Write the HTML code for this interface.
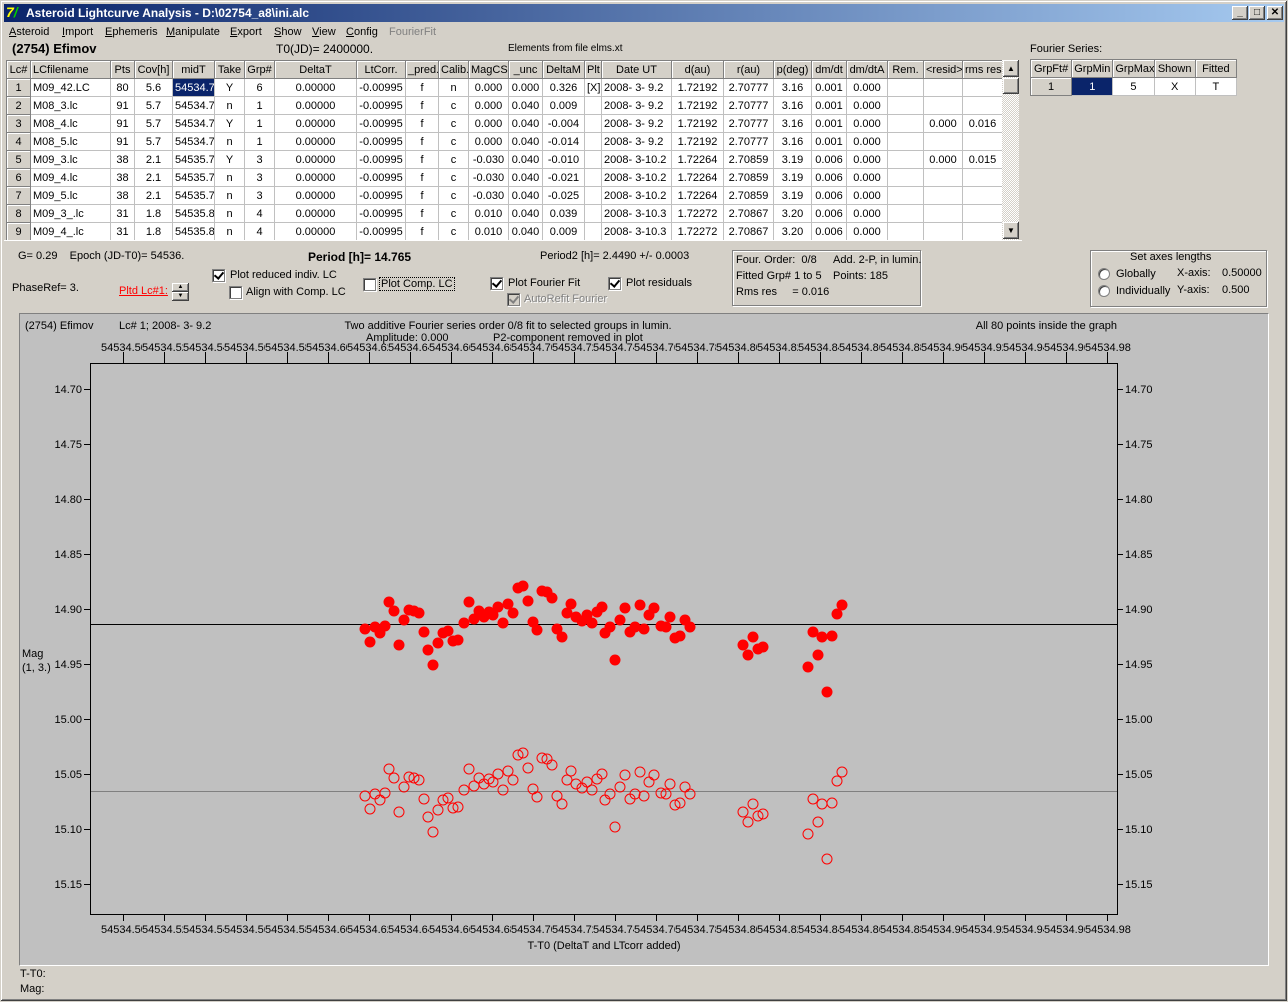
<!DOCTYPE html>
<html><head><meta charset="utf-8">
<style>
*{box-sizing:border-box}
body{margin:0;width:1288px;height:1002px;background:#d4d0c8;font-family:"Liberation Sans",sans-serif;font-size:11px;color:#000;position:relative;overflow:hidden}
.a{position:absolute;white-space:nowrap}
#win{position:absolute;left:0;top:0;width:1288px;height:1002px;border:1px solid #d4d0c8;box-shadow:inset -1px -1px #404040,inset 1px 1px #fff,inset -2px -2px #808080}
#title{position:absolute;left:4px;top:4px;width:1280px;height:18px;background:linear-gradient(90deg,#0a246a,#a6caf0);color:#fff;font-weight:bold;font-size:12px;line-height:18px;padding-left:22px}
.tb{position:absolute;top:6px;width:16px;height:14px;background:#d4d0c8;box-shadow:inset -1px -1px #404040,inset 1px 1px #fff,inset -2px -2px #808080;font-size:10px;font-weight:bold;color:#000;text-align:center;line-height:14px}
#menu span{position:absolute;top:0}
table{border-collapse:collapse;table-layout:fixed;position:absolute}
td{border:1px solid #c0c0c0;height:18px;padding:0 2px;overflow:hidden;white-space:nowrap;text-align:center;background:#fff;font-size:11px}
td.h{background:#d4d0c8;border:1px solid #808080;box-shadow:inset 1px 1px #fff}
td.l{text-align:left}
td.sel{background:#0a246a;color:#fff}
.cb{position:absolute;width:13px;height:13px;background:#fff;border:1px solid #808080;box-shadow:inset 1px 1px #404040,1px 1px #fff}
.cb.c::after{content:"";position:absolute;left:3px;top:0px;width:4px;height:7px;border:solid #000;border-width:0 2px 2px 0;transform:rotate(40deg)}
.cb.d{background:#d4d0c8}
.cb.d::after{border-color:#808080}
.grp{position:absolute;border:1px solid #808080;box-shadow:1px 1px #fff,inset 1px 1px #fff}
.rad{position:absolute;width:12px;height:12px;border-radius:50%;background:#fff;border:1px solid #808080;box-shadow:inset 1px 1px #404040}
</style></head><body>
<div id="win"></div>
<div id="title">Asteroid Lightcurve Analysis - D:\02754_a8\ini.alc</div>
<div class="a" style="left:6px;top:5px;width:15px;height:15px;color:#ff0;font-weight:bold;font-size:14px;line-height:15px;font-style:italic">7<span style="color:#0c0">/</span></div>
<div class="tb" style="left:1232px">_</div><div class="tb" style="left:1249px">□</div><div class="tb" style="left:1267px">✕</div>
<div id="menu" class="a" style="left:0;top:26px"><span style="left:9px"><u>A</u>steroid</span><span style="left:62px"><u>I</u>mport</span><span style="left:105px"><u>E</u>phemeris</span><span style="left:166px"><u>M</u>anipulate</span><span style="left:230px"><u>E</u>xport</span><span style="left:274px"><u>S</u>how</span><span style="left:312px"><u>V</u>iew</span><span style="left:346px"><u>C</u>onfig</span><span style="left:389px;color:#808080">FourierFit</span></div>
<div class="a" style="left:12px;top:41px;font-weight:bold;font-size:13px">(2754) Efimov</div>
<div class="a" style="left:276px;top:42px;font-size:12px">T0(JD)= 2400000.</div>
<div class="a" style="left:508px;top:43px;font-size:10px">Elements from file elms.xt</div>

<table style="left:6px;top:60px;width:996px">
<colgroup><col style="width:24px"><col style="width:80px"><col style="width:24px"><col style="width:38px"><col style="width:42px"><col style="width:30px"><col style="width:30px"><col style="width:82px"><col style="width:49px"><col style="width:33px"><col style="width:30px"><col style="width:40px"><col style="width:34px"><col style="width:42px"><col style="width:17px"><col style="width:70px"><col style="width:52px"><col style="width:50px"><col style="width:38px"><col style="width:35px"><col style="width:41px"><col style="width:36px"><col style="width:39px"><col style="width:40px"></colgroup>
<tr><td class="h">Lc#</td><td class="h l">LCfilename</td><td class="h">Pts</td><td class="h">Cov[h]</td><td class="h">midT</td><td class="h">Take</td><td class="h">Grp#</td><td class="h">DeltaT</td><td class="h">LtCorr.</td><td class="h">_pred.</td><td class="h">Calib.</td><td class="h">MagCS</td><td class="h">_unc</td><td class="h">DeltaM</td><td class="h">Plt</td><td class="h">Date UT</td><td class="h">d(au)</td><td class="h">r(au)</td><td class="h">p(deg)</td><td class="h">dm/dt</td><td class="h">dm/dtA</td><td class="h">Rem.</td><td class="h">&lt;resid&gt;</td><td class="h">rms res</td></tr>
<tr><td class="h">1</td><td class="l">M09_42.LC</td><td>80</td><td>5.6</td><td class="sel l">54534.7</td><td>Y</td><td>6</td><td>0.00000</td><td>-0.00995</td><td>f</td><td>n</td><td>0.000</td><td>0.000</td><td>0.326</td><td>[X]</td><td class="l">2008- 3- 9.2</td><td>1.72192</td><td>2.70777</td><td>3.16</td><td>0.001</td><td>0.000</td><td></td><td></td><td></td></tr>
<tr><td class="h">2</td><td class="l">M08_3.lc</td><td>91</td><td>5.7</td><td class="l">54534.7</td><td>n</td><td>1</td><td>0.00000</td><td>-0.00995</td><td>f</td><td>c</td><td>0.000</td><td>0.040</td><td>0.009</td><td></td><td class="l">2008- 3- 9.2</td><td>1.72192</td><td>2.70777</td><td>3.16</td><td>0.001</td><td>0.000</td><td></td><td></td><td></td></tr>
<tr><td class="h">3</td><td class="l">M08_4.lc</td><td>91</td><td>5.7</td><td class="l">54534.7</td><td>Y</td><td>1</td><td>0.00000</td><td>-0.00995</td><td>f</td><td>c</td><td>0.000</td><td>0.040</td><td>-0.004</td><td></td><td class="l">2008- 3- 9.2</td><td>1.72192</td><td>2.70777</td><td>3.16</td><td>0.001</td><td>0.000</td><td></td><td>0.000</td><td>0.016</td></tr>
<tr><td class="h">4</td><td class="l">M08_5.lc</td><td>91</td><td>5.7</td><td class="l">54534.7</td><td>n</td><td>1</td><td>0.00000</td><td>-0.00995</td><td>f</td><td>c</td><td>0.000</td><td>0.040</td><td>-0.014</td><td></td><td class="l">2008- 3- 9.2</td><td>1.72192</td><td>2.70777</td><td>3.16</td><td>0.001</td><td>0.000</td><td></td><td></td><td></td></tr>
<tr><td class="h">5</td><td class="l">M09_3.lc</td><td>38</td><td>2.1</td><td class="l">54535.7</td><td>Y</td><td>3</td><td>0.00000</td><td>-0.00995</td><td>f</td><td>c</td><td>-0.030</td><td>0.040</td><td>-0.010</td><td></td><td class="l">2008- 3-10.2</td><td>1.72264</td><td>2.70859</td><td>3.19</td><td>0.006</td><td>0.000</td><td></td><td>0.000</td><td>0.015</td></tr>
<tr><td class="h">6</td><td class="l">M09_4.lc</td><td>38</td><td>2.1</td><td class="l">54535.7</td><td>n</td><td>3</td><td>0.00000</td><td>-0.00995</td><td>f</td><td>c</td><td>-0.030</td><td>0.040</td><td>-0.021</td><td></td><td class="l">2008- 3-10.2</td><td>1.72264</td><td>2.70859</td><td>3.19</td><td>0.006</td><td>0.000</td><td></td><td></td><td></td></tr>
<tr><td class="h">7</td><td class="l">M09_5.lc</td><td>38</td><td>2.1</td><td class="l">54535.7</td><td>n</td><td>3</td><td>0.00000</td><td>-0.00995</td><td>f</td><td>c</td><td>-0.030</td><td>0.040</td><td>-0.025</td><td></td><td class="l">2008- 3-10.2</td><td>1.72264</td><td>2.70859</td><td>3.19</td><td>0.006</td><td>0.000</td><td></td><td></td><td></td></tr>
<tr><td class="h">8</td><td class="l">M09_3_.lc</td><td>31</td><td>1.8</td><td class="l">54535.8</td><td>n</td><td>4</td><td>0.00000</td><td>-0.00995</td><td>f</td><td>c</td><td>0.010</td><td>0.040</td><td>0.039</td><td></td><td class="l">2008- 3-10.3</td><td>1.72272</td><td>2.70867</td><td>3.20</td><td>0.006</td><td>0.000</td><td></td><td></td><td></td></tr>
<tr><td class="h">9</td><td class="l">M09_4_.lc</td><td>31</td><td>1.8</td><td class="l">54535.8</td><td>n</td><td>4</td><td>0.00000</td><td>-0.00995</td><td>f</td><td>c</td><td>0.010</td><td>0.040</td><td>0.009</td><td></td><td class="l">2008- 3-10.3</td><td>1.72272</td><td>2.70867</td><td>3.20</td><td>0.006</td><td>0.000</td><td></td><td></td><td></td></tr>
</table>
<div class="a" style="left:1002px;top:60px;width:17px;height:180px;background:repeating-conic-gradient(#d4d0c8 0 25%,#fff 0 50%) 0 0/2px 2px"></div>
<div class="tb" style="left:1003px;top:60px;height:17px;line-height:17px;font-size:8px">▲</div>
<div class="tb" style="left:1003px;top:78px;height:16px"></div>
<div class="tb" style="left:1003px;top:222px;height:17px;line-height:17px;font-size:8px">▼</div>
<div class="a" style="left:4px;top:240px;width:1018px;height:2px;border-top:1px solid #fff"></div>

<div class="a" style="left:1030px;top:43px">Fourier Series:</div>
<table style="left:1030px;top:59px;width:207px">
<colgroup><col style="width:41px"><col style="width:41px"><col style="width:41px"><col style="width:41px"><col style="width:41px"></colgroup>
<tr><td class="h">GrpFt#</td><td class="h">GrpMin</td><td class="h">GrpMax</td><td class="h">Shown</td><td class="h">Fitted</td></tr>
<tr><td class="h">1</td><td class="sel">1</td><td>5</td><td>X</td><td>T</td></tr>
</table>

<div class="a" style="left:18px;top:250px">G= 0.29&nbsp;&nbsp;&nbsp; Epoch (JD-T0)= 54536.</div>
<div class="a" style="left:308px;top:250px;font-weight:bold;font-size:12px">Period [h]= 14.765</div>
<div class="a" style="left:540px;top:250px">Period2 [h]= 2.4490 +/- 0.0003</div>
<div class="a" style="left:12px;top:282px">PhaseRef= 3.</div>
<div class="a" style="left:119px;top:285px;color:#f00;text-decoration:underline">Pltd Lc#1:</div>
<div class="tb" style="left:172px;top:283px;height:9px;width:17px;font-size:6px;line-height:9px">▲</div>
<div class="tb" style="left:172px;top:292px;height:9px;width:17px;font-size:6px;line-height:9px">▼</div>
<div class="cb c" style="left:212px;top:269px"></div><div class="a" style="left:230px;top:269px">Plot reduced indiv. LC</div>
<div class="cb" style="left:229px;top:286px"></div><div class="a" style="left:246px;top:286px">Align with Comp. LC</div>
<div class="cb" style="left:363px;top:278px"></div><div class="a" style="left:379px;top:277px;border:1px dotted #000;padding:0 1px">Plot Comp. LC</div>
<div class="cb c" style="left:490px;top:277px"></div><div class="a" style="left:508px;top:277px">Plot Fourier Fit</div>
<div class="cb c" style="left:608px;top:277px"></div><div class="a" style="left:626px;top:277px">Plot residuals</div>
<div class="cb c d" style="left:507px;top:293px"></div><div class="a" style="left:524px;top:293px;color:#808080;text-shadow:1px 1px #fff">AutoRefit Fourier</div>

<div class="grp" style="left:732px;top:250px;width:189px;height:56px"></div>
<div class="a" style="left:736px;top:254px">Four. Order:&nbsp; 0/8</div><div class="a" style="left:833px;top:254px">Add. 2-P, in lumin.</div>
<div class="a" style="left:736px;top:270px">Fitted Grp# 1 to 5</div><div class="a" style="left:833px;top:270px">Points: 185</div>
<div class="a" style="left:736px;top:286px">Rms res&nbsp;&nbsp;&nbsp;&nbsp; = 0.016</div>

<div class="grp" style="left:1090px;top:250px;width:177px;height:57px"></div>
<div class="a" style="left:1130px;top:251px">Set axes lengths</div>
<div class="rad" style="left:1098px;top:268px"></div><div class="a" style="left:1116px;top:268px">Globally</div>
<div class="rad" style="left:1098px;top:285px"></div><div class="a" style="left:1116px;top:285px">Individually</div>
<div class="a" style="left:1177px;top:267px">X-axis:</div><div class="a" style="left:1222px;top:267px">0.50000</div>
<div class="a" style="left:1177px;top:284px">Y-axis:</div><div class="a" style="left:1222px;top:284px">0.500</div>

<div class="a" style="left:19px;top:313px;width:1250px;height:653px;background:#c0c0c0;border:1px solid #808080;border-right-color:#fff;border-bottom-color:#fff"></div>
<svg id="p" class="a" style="left:0;top:0" width="1288" height="1002" font-family="Liberation Sans, sans-serif" font-size="11"></svg>
<div class="a" style="left:20px;top:968px">T-T0:</div>
<div class="a" style="left:20px;top:983px">Mag:</div>
<script>
var s='';
function t(x,y,str,anc){s+='<text x="'+x+'" y="'+y+'"'+(anc?' text-anchor="'+anc+'"':'')+'>'+str+'</text>';}
t(25,329,'(2754) Efimov');t(119,329,'Lc# 1; 2008- 3- 9.2');
t(508,329,'Two additive Fourier series order 0/8 fit to selected groups in lumin.','middle');
t(1117,329,'All 80 points inside the graph','end');
for(var i=0;i<25;i++){var x=123+i*41;var v=(54534.50+i*0.02).toFixed(2);
s+='<line x1="'+(x+.5)+'" y1="352" x2="'+(x+.5)+'" y2="363" stroke="#000"/>';
s+='<line x1="'+(x+.5)+'" y1="914" x2="'+(x+.5)+'" y2="921" stroke="#000"/>';
var w=(i==24)?50:41;
s+='<rect x="'+(x-22)+'" y="342" width="'+w+'" height="10" fill="#c0c0c0"/>';
s+='<rect x="'+(x-22)+'" y="923" width="'+w+'" height="11" fill="#c0c0c0"/>';
s+='<svg x="'+(x-22)+'" y="341" width="'+w+'" height="11" overflow="hidden"><text x="0" y="10">'+v+'</text></svg>';
s+='<svg x="'+(x-22)+'" y="923" width="'+w+'" height="13" overflow="hidden"><text x="0" y="10">'+v+'</text></svg>';}
t(366,341,'Amplitude: 0.000');t(493,341,'P2-component removed in plot');
t(22,657,'Mag');t(22,671,'(1, 3.)');
t(604,949,'T-T0 (DeltaT and LTcorr added)','middle');
s+='<rect x="90.5" y="363.5" width="1027" height="551" fill="none" stroke="#000"/>';
for(var j=0;j<10;j++){var y=389+j*55;var v=(14.70+j*0.05).toFixed(2);
s+='<line x1="84" y1="'+(y+.5)+'" x2="90" y2="'+(y+.5)+'" stroke="#000"/><line x1="1117" y1="'+(y+.5)+'" x2="1123" y2="'+(y+.5)+'" stroke="#000"/>';
t(82,y+4,v,'end');t(1125,y+4,v);}
s+='<line x1="91" y1="624.5" x2="1117" y2="624.5" stroke="#000"/><line x1="91" y1="791.5" x2="1117" y2="791.5" stroke="#808080"/>';
var P=[[365,629],[370,642],[375,627],[380,633],[385,626],[389,602],[394,611],[399,645],[404,620],[409,610],[414,611],[419,613],[424,632],[428,650],[433,665],[438,643],[443,633],[448,631],[453,641],[458,640],[464,623],[469,602],[474,619],[479,611],[484,617],[489,612],[493,615],[498,607],[503,623],[508,604],[513,613],[518,588],[523,586],[528,601],[533,622],[537,630],[542,591],[547,592],[552,598],[557,629],[562,637],[567,613],[571,604],[576,617],[582,621],[587,615],[592,623],[597,612],[602,607],[605,633],[610,627],[615,660],[620,620],[625,608],[630,632],[635,627],[640,605],[644,629],[649,615],[654,608],[661,626],[666,627],[670,617],[675,638],[680,636],[685,620],[690,627],[743,645],[748,655],[753,637],[758,649],[763,647],[808,667],[813,632],[818,655],[822,637],[827,692],[832,636],[837,614],[842,605]];
P.forEach(function(p){s+='<circle cx="'+p[0]+'" cy="'+p[1]+'" r="5.5" fill="#f00"/>';
s+='<circle cx="'+p[0]+'" cy="'+(p[1]+167)+'" r="5" fill="none" stroke="#f00"/>';});
document.getElementById('p').innerHTML=s;
</script>
</body></html>
